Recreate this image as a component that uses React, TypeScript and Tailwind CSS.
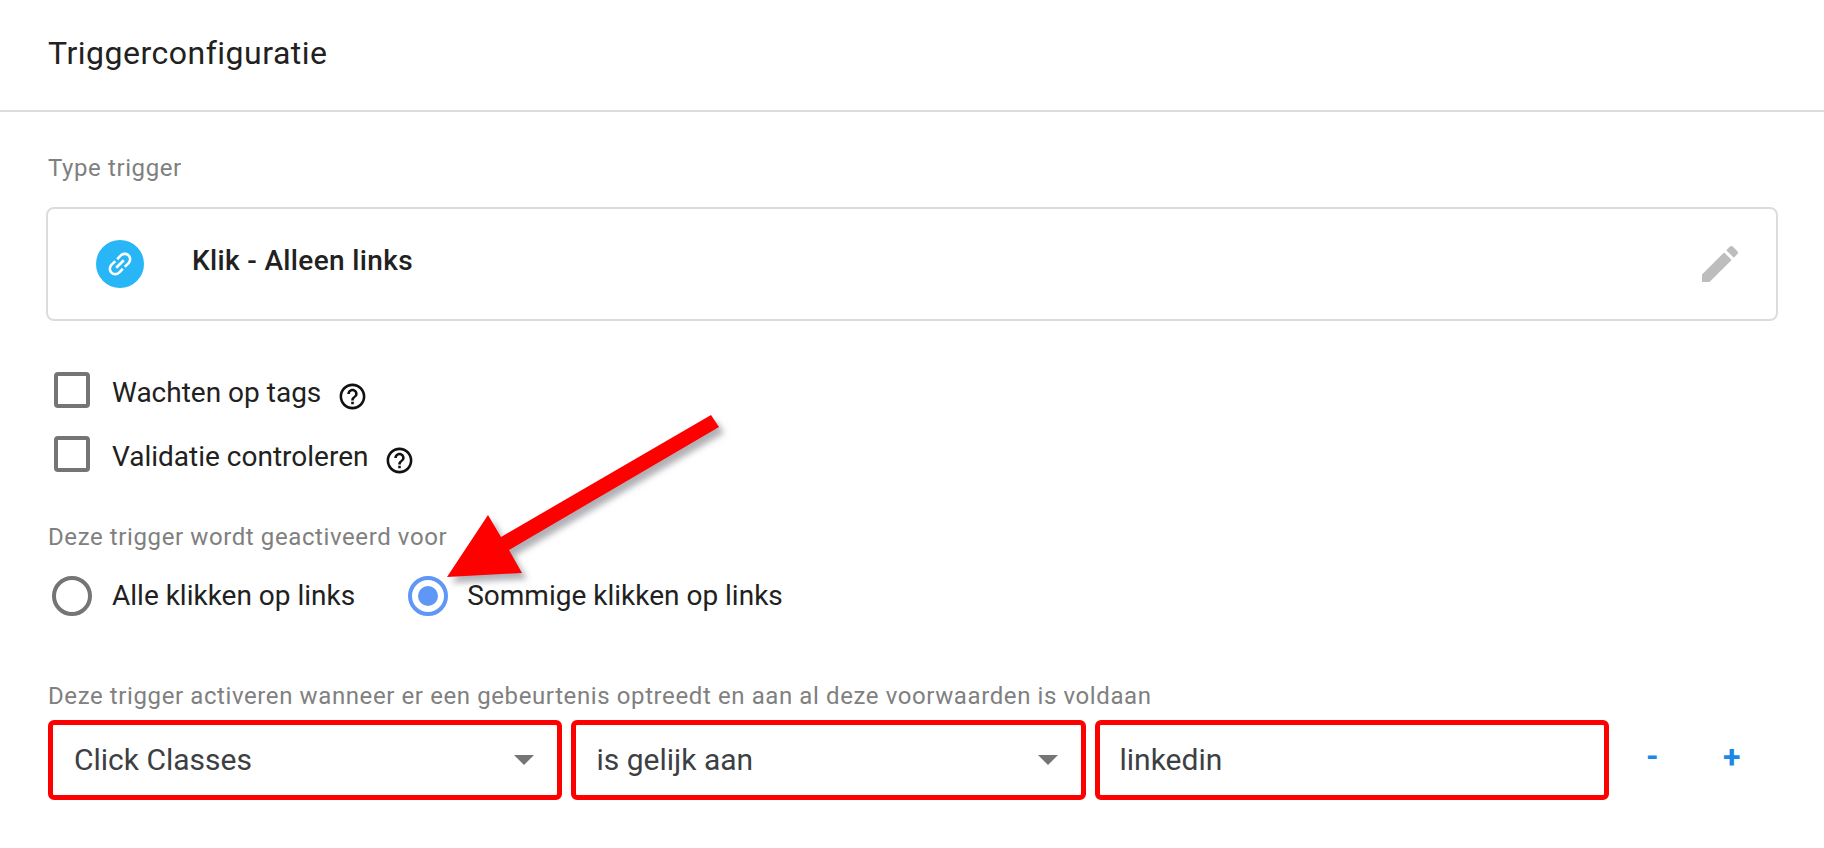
const HelpIcon = () => (
  <svg viewBox="0 0 24 24" className="w-[31px] h-[31px] fill-[#111]">
    <path d="M11 18h2v-2h-2v2zm1-16C6.48 2 2 6.48 2 12s4.48 10 10 10 10-4.48 10-10S17.52 2 12 2zm0 18c-4.41 0-8-3.59-8-8s3.59-8 8-8 8 3.59 8 8-3.59 8-8 8zm0-14c-2.21 0-4 1.79-4 4h2c0-1.1.9-2 2-2s2 .9 2 2c0 2-3 1.75-3 5h2c0-2.25 3-2.5 3-5 0-2.21-1.79-4-4-4z" />
  </svg>
);

const CheckRow = ({ label, gap }: { label: string; gap: string }) => (
  <div className="flex items-center h-9 ml-[6px]">
    <div className="w-9 h-9 rounded-[4px] border-[4px] border-[#757575]" />
    <span className="ml-[22px] text-[28px] leading-none text-[#212121] mt-[6px]">{label}</span>
    <span className={`${gap} mt-[12px] flex`}>
      <HelpIcon />
    </span>
  </div>
);

const Caret = () => (
  <svg viewBox="0 0 20 10" className="w-5 h-[10px] fill-[#757575]">
    <path d="M0 0h20L10 10z" />
  </svg>
);

const SelectField = ({ label, width }: { label: string; width: string }) => (
  <div className={`${width} h-20 flex items-center justify-between rounded-[6px] border-[5px] border-[#ff0000] pl-[21px] pr-[23px]`}>
    <span className="text-[30px] leading-none text-[#3c4043]">{label}</span>
    <Caret />
  </div>
);

export default function App() {
  return (
    <div className="relative w-[1824px] h-[848px] overflow-hidden bg-white font-['Roboto',sans-serif]">
      <header className="h-[112px] flex items-center px-12 border-b-2 border-[#dadce0]">
        <h1 className="text-[32px] leading-none font-normal tracking-[0.5px] text-[#212121] mt-[-4px]">Triggerconfiguratie</h1>
      </header>

      <main className="px-12">
        <div className="mt-[44px] h-6 text-[24px] leading-6 tracking-[0.6px] text-[#808080]">Type trigger</div>

        <div className="mt-[27px] -ml-[2px] w-[1732px] h-[114px] flex items-center rounded-[8px] border-2 border-[#dadce0] pl-[48px] pr-8">
          <div className="w-12 h-12 rounded-full bg-[#29b6f6] flex items-center justify-center">
            <svg viewBox="0 0 24 24" className="w-8 h-8 fill-white -rotate-45">
              <path d="M3.9 12c0-1.71 1.39-3.1 3.1-3.1h4V7H7c-2.76 0-5 2.24-5 5s2.24 5 5 5h4v-1.9H7c-1.71 0-3.1-1.39-3.1-3.1zM8 13h8v-2H8v2zm9-6h-4v1.9h4c1.71 0 3.1 1.39 3.1 3.1s-1.39 3.1-3.1 3.1h-4V17h4c2.76 0 5-2.24 5-5s-2.24-5-5-5z" />
            </svg>
          </div>
          <span className="ml-[48px] text-[28px] leading-none font-medium tracking-[0.35px] text-[#212121] mt-[-6px]">Klik - Alleen links</span>
          <svg viewBox="0 0 24 24" className="ml-auto w-12 h-12 fill-[#bdbdbd]">
            <path d="M3 17.25V21h3.75L17.81 9.94l-3.75-3.75L3 17.25zM20.71 7.04c.39-.39.39-1.02 0-1.41l-2.34-2.34c-.39-.39-1.02-.39-1.41 0l-1.83 1.83 3.75 3.75 1.83-1.83z" />
          </svg>
        </div>

        <div className="mt-[51px] flex flex-col gap-7">
          <CheckRow label="Wachten op tags" gap="ml-[16px]" />
          <CheckRow label="Validatie controleren" gap="ml-[16px]" />
        </div>

        <div className="mt-[53px] h-6 text-[24px] leading-6 tracking-[0.6px] text-[#808080]">Deze trigger wordt geactiveerd voor</div>

        <div className="mt-[27px] h-10 flex items-center ml-1">
          <div className="w-10 h-10 rounded-full border-[4px] border-[#757575]" />
          <span className="ml-[20px] text-[28px] leading-none text-[#212121]">Alle klikken op links</span>
          <div className="ml-[53px] w-10 h-10 rounded-full border-[4px] border-[#5e97f6] flex items-center justify-center">
            <div className="w-5 h-5 rounded-full bg-[#5e97f6]" />
          </div>
          <span className="ml-[19px] text-[28px] leading-none text-[#212121]">Sommige klikken op links</span>
        </div>

        <div className="mt-[68px] h-6 text-[24px] leading-6 tracking-[0.6px] text-[#808080] whitespace-nowrap">
          Deze trigger activeren wanneer er een gebeurtenis optreedt en aan al deze voorwaarden is voldaan
        </div>

        <div className="mt-3 flex items-center gap-[8.5px]">
          <SelectField label="Click Classes" width="w-[514px]" />
          <SelectField label="is gelijk aan" width="w-[515.5px]" />
          <div className="w-[514px] h-20 flex items-center rounded-[6px] border-[5px] border-[#ff0000] pl-[20px]">
            <span className="text-[30px] leading-none text-[#3c4043]">linkedin</span>
          </div>
          <span className="ml-[29px] text-[32px] leading-none font-bold text-[#1e88e5] mt-[-8px]">-</span>
          <span className="ml-[56px] text-[32px] leading-none font-bold text-[#1e88e5] mt-[-6px]">+</span>
        </div>
      </main>

      {/* annotation arrow drawn over the form */}
      <svg
        viewBox="0 0 1824 848"
        className="absolute inset-0 w-[1824px] h-[848px] pointer-events-none drop-shadow-[5px_6px_3px_rgba(110,110,120,0.55)]"
      >
        <path d="M711 415L719 427L509 550L522 573L447 577L488 515L501 537Z" fill="#ff0000" />
      </svg>
    </div>
  );
}
